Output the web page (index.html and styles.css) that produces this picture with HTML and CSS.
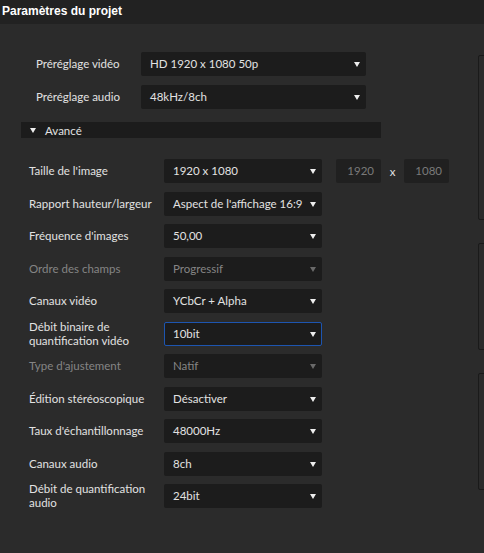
FILE: index.html
```html
<!DOCTYPE html>
<html lang="fr">
<head>
    <meta charset="UTF-8">
    <meta name="viewport" content="width=device-width, initial-scale=1.0">
    <title>Paramètres du projet</title>
    <link rel="stylesheet" href="styles.css">
</head>
<body>
    <div class="titlebar">Paramètres du projet</div>

    <div class="page">
        <div class="settings">
            <div class="presets">
                <div class="row">
                    <label class="label">Préréglage vidéo</label>
                    <div class="select">HD 1920 x 1080 50p</div>
                </div>
                <div class="row">
                    <label class="label">Préréglage audio</label>
                    <div class="select">48kHz/8ch</div>
                </div>
            </div>

            <div class="advanced-toggle"><span class="caret"></span>Avancé</div>

            <div class="advanced">
                <div class="row">
                    <label class="label">Taille de l'image</label>
                    <div class="select">1920 x 1080</div>
                    <div class="size-fields">
                        <div class="num-field">1920</div>
                        <span class="times">x</span>
                        <div class="num-field">1080</div>
                    </div>
                </div>
                <div class="row">
                    <label class="label">Rapport hauteur/largeur</label>
                    <div class="select">Aspect de l'affichage 16:9</div>
                </div>
                <div class="row">
                    <label class="label">Fréquence d'images</label>
                    <div class="select">50,00</div>
                </div>
                <div class="row disabled">
                    <label class="label">Ordre des champs</label>
                    <div class="select">Progressif</div>
                </div>
                <div class="row">
                    <label class="label">Canaux vidéo</label>
                    <div class="select">YCbCr + Alpha</div>
                </div>
                <div class="row">
                    <label class="label">Débit binaire de<br>quantification vidéo</label>
                    <div class="select focused">10bit</div>
                </div>
                <div class="row disabled">
                    <label class="label">Type d'ajustement</label>
                    <div class="select">Natif</div>
                </div>
                <div class="row">
                    <label class="label">Édition stéréoscopique</label>
                    <div class="select">Désactiver</div>
                </div>
                <div class="row">
                    <label class="label">Taux d'échantillonnage</label>
                    <div class="select">48000Hz</div>
                </div>
                <div class="row">
                    <label class="label">Canaux audio</label>
                    <div class="select">8ch</div>
                </div>
                <div class="row">
                    <label class="label">Débit de quantification<br>audio</label>
                    <div class="select">24bit</div>
                </div>
            </div>
        </div>

        <div class="side">
            <div class="side-box box-a"></div>
            <div class="side-box box-b"></div>
            <div class="side-box box-c"></div>
        </div>
    </div>
</body>
</html>
```

FILE: styles.css
```css
html, body {
    margin: 0;
    padding: 0;
}
body {
    width: 484px;
    height: 553px;
    overflow: hidden;
    background-color: #2b2b2b;
    color: #e2e2e2;
    font-family: Lato, "Open Sans", sans-serif;
    font-size: 11.5px;
}
.titlebar {
    height: 24px;
    line-height: 22px;
    padding-left: 2px;
    background-color: #222222;
    color: #ffffff;
    font-family: "Liberation Sans", Arial, sans-serif;
    font-weight: bold;
    font-size: 12px;
}
.page {
    display: flex;
}
.settings {
    width: 478px;
    flex-shrink: 0;
}
.row {
    display: flex;
    align-items: center;
    height: 24px;
}
.label {
    line-height: 14px;
    white-space: nowrap;
}
.select {
    position: relative;
    height: 24px;
    line-height: 24px;
    padding-left: 9px;
    box-sizing: border-box;
    background-color: #1c1c1c;
    border-radius: 2px;
    white-space: nowrap;
}
.select::after {
    content: "";
    position: absolute;
    right: 6px;
    top: 10px;
    border-left: 3px solid transparent;
    border-right: 3px solid transparent;
    border-top: 5px solid #eeeeee;
}
.select.focused {
    border: 1px solid #1d55b0;
    line-height: 22px;
    padding-left: 8px;
}
.select.focused::after {
    right: 5px;
    top: 9px;
}
.disabled .label,
.disabled .select {
    color: #858585;
}
.disabled .select::after {
    border-top-color: #6a6a6a;
}

/* presets */
.presets {
    padding: 28px 0 0 36px;
    display: flex;
    flex-direction: column;
    gap: 9px;
}
.presets .label {
    width: 105px;
}
.presets .select {
    width: 225px;
}

.advanced-toggle {
    display: flex;
    align-items: center;
    margin: 13px 0 0 21px;
    width: 360px;
    height: 16px;
    background-color: #1c1c1c;
}
.caret {
    margin: 0 9px 0 9px;
    border-left: 3px solid transparent;
    border-right: 3px solid transparent;
    border-top: 5px solid #eeeeee;
}

/* advanced */
.advanced {
    padding: 21px 0 0 29px;
    display: flex;
    flex-direction: column;
    gap: 8.5px;
}
.advanced .label {
    width: 135px;
}
.advanced .select {
    width: 158px;
}
.size-fields {
    display: flex;
    align-items: center;
    margin-left: 14px;
}
.num-field {
    width: 45px;
    height: 24px;
    line-height: 24px;
    padding-right: 7px;
    box-sizing: border-box;
    text-align: right;
    background-color: #202020;
    border-radius: 2px;
    color: #7a7a7a;
}
.times {
    width: 23px;
    text-align: center;
    color: #e2e2e2;
}

/* side panels, cut by the window edge */
.side {
    display: flex;
    flex-direction: column;
    width: 6px;
    overflow: hidden;
}
.side-box {
    width: 20px;
    border: 1px solid #1a1a1a;
    border-radius: 2px;
    box-sizing: border-box;
}
.box-a {
    margin-top: 31px;
    height: 165px;
}
.box-b {
    margin-top: 23px;
    height: 107px;
}
.box-c {
    margin-top: 23px;
    height: 117px;
}
```
